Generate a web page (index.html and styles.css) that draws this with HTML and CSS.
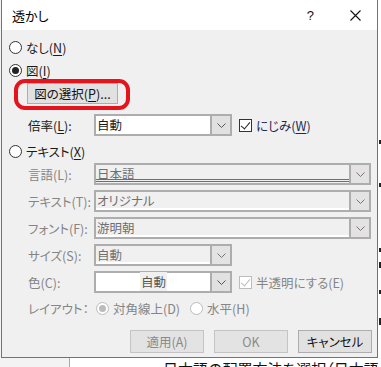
FILE: index.html
```html
<!DOCTYPE html>
<html>
<head>
    <meta charset="UTF-8">
    <title>透かし</title>
    <link rel="stylesheet" href="styles.css">
</head>
<body>
    <!-- документ за окном -->
    <div class="desk">
        <div class="pane"></div>
        <div class="edge">
            <span class="mark m1"></span>
            <span class="mark m2"></span>
            <span class="mark m3"></span>
            <span class="mark m4"></span>
            <span class="mark m5"></span>
            <span class="mark m6"></span>
        </div>
        <p class="doc-line">日本語の配置方法を選択（日本語テキスト）</p>
    </div>

    <div class="dialog">
        <div class="titlebar">
            <span class="title">透かし</span>
            <span class="help">?</span>
            <svg class="close" width="11" height="11" viewBox="0 0 11 11">
                <path d="M0.5 0.5 L10.5 10.5 M10.5 0.5 L0.5 10.5" stroke="#111" stroke-width="1.1" fill="none"/>
            </svg>
        </div>

        <div class="content">
            <div class="radio-row">
                <span class="radio"></span>
                <span>なし(<u>N</u>)</span>
            </div>
            <div class="radio-row second">
                <span class="radio on"></span>
                <span>図(<u>I</u>)</span>
            </div>

            <div class="pick-row">
                <button class="btn pick">図の選択(<u>P</u>)...</button>
            </div>

            <div class="field-row scale-row">
                <span class="label">倍率(<u>L</u>):</span>
                <div class="combo short">
                    <span class="value">自動</span>
                    <span class="drop">
                        <svg width="9" height="5" viewBox="0 0 9 5"><polyline points="0.5,0.5 4.5,4.5 8.5,0.5" fill="none" stroke="#555" stroke-width="1"/></svg>
                    </span>
                </div>
                <span class="check on"></span>
                <span class="check-text blur">にじみ(<u>W</u>)</span>
            </div>

            <div class="radio-row text-radio">
                <span class="radio"></span>
                <span>テキスト(<u>X</u>)</span>
            </div>

            <div class="text-grid">
                <span class="label off">言語(L):</span>
                <div class="combo wide off lang">
                    <span class="value">日本語</span>
                    <span class="drop">
                        <svg width="9" height="5" viewBox="0 0 9 5"><polyline points="0.5,0.5 4.5,4.5 8.5,0.5" fill="none" stroke="#7b6f7b" stroke-width="1"/></svg>
                    </span>
                </div>

                <span class="label off">テキスト(T):</span>
                <div class="combo wide off">
                    <span class="value">オリジナル</span>
                    <span class="drop">
                        <svg width="9" height="5" viewBox="0 0 9 5"><polyline points="0.5,0.5 4.5,4.5 8.5,0.5" fill="none" stroke="#7b6f7b" stroke-width="1"/></svg>
                    </span>
                </div>

                <span class="label off">フォント(F):</span>
                <div class="combo wide off">
                    <span class="value">游明朝</span>
                    <span class="drop">
                        <svg width="9" height="5" viewBox="0 0 9 5"><polyline points="0.5,0.5 4.5,4.5 8.5,0.5" fill="none" stroke="#7b6f7b" stroke-width="1"/></svg>
                    </span>
                </div>

                <span class="label off">サイズ(S):</span>
                <div class="line">
                    <div class="combo short off">
                        <span class="value">自動</span>
                        <span class="drop">
                            <svg width="9" height="5" viewBox="0 0 9 5"><polyline points="0.5,0.5 4.5,4.5 8.5,0.5" fill="none" stroke="#7b6f7b" stroke-width="1"/></svg>
                        </span>
                    </div>
                </div>

                <span class="label off">色(C):</span>
                <div class="line">
                    <div class="combo short color">
                        <span class="value center"><span class="swatch">自動</span></span>
                        <span class="drop">
                            <svg width="9" height="5" viewBox="0 0 9 5"><polyline points="0.5,0.5 4.5,4.5 8.5,0.5" fill="none" stroke="#555" stroke-width="1"/></svg>
                        </span>
                    </div>
                    <span class="check on off"></span>
                    <span class="check-text off">半透明にする(E)</span>
                </div>
            </div>

            <div class="field-row layout-row">
                <span class="label off">レイアウト：</span>
                <span class="radio on off"></span>
                <span class="opt off">対角線上(D)</span>
                <span class="radio off"></span>
                <span class="opt off">水平(H)</span>
            </div>

            <div class="actions">
                <button class="btn action" disabled>適用(A)</button>
                <button class="btn action" disabled>OK</button>
                <button class="btn action">キャンセル</button>
            </div>
        </div>
    </div>
</body>
</html>
```

FILE: styles.css
```css
/* Общие настройки */
html, body {
  margin: 0;
  padding: 0;
}

body {
  width: 381px;
  height: 367px;
  overflow: hidden;
  position: relative;
  background: #ffffff;
  font-family: "Noto Sans CJK JP", "Noto Sans", sans-serif;
  font-size: 12.5px;
  color: #1a1a1a;
  font-feature-settings: "palt";
}

u {
  text-decoration: underline;
  text-underline-offset: 2px;
}

/* Документ позади окна */
.desk {
  position: absolute;
  inset: 0;
}

.pane {
  position: absolute;
  left: 0;
  top: 0;
  width: 69px;
  height: 367px;
  background: #f3f3f3;
  border-right: 1px solid #a8a8a8;
}

.edge {
  position: absolute;
  left: 378px;
  top: 0;
  width: 3px;
  height: 367px;
}

.mark {
  position: absolute;
  left: 1px;
  width: 2px;
  height: 4px;
  background: #222;
}

.m1 { top: 140px; }
.m2 { top: 183px; }
.m3 { top: 248px; }
.m4 { top: 262px; height: 6px; }
.m5 { top: 290px; }
.m6 { top: 318px; height: 7px; }

.doc-line {
  position: absolute;
  left: 163px;
  top: 361px;
  margin: 0;
  font-size: 15px;
  line-height: 15px;
  color: #111;
  white-space: nowrap;
}

/* Окно диалога */
.dialog {
  position: absolute;
  left: 1px;
  top: 0;
  width: 375px;
  border-left: 1px solid #2d83d6;
  border-right: 1px solid #2d83d6;
  border-bottom: 1px solid #2d83d6;
  background: #f0f0f0;
}

.titlebar {
  height: 30px;
  background: #ffffff;
  display: flex;
  align-items: center;
}

.title {
  margin-left: 10px;
  font-size: 13px;
  color: #000;
}

.help {
  margin-left: auto;
  margin-right: 36px;
  font-size: 13px;
  font-family: "Liberation Sans", sans-serif;
  color: #111;
}

.close {
  margin-right: 16px;
}

.content {
  height: 327px;
  box-sizing: border-box;
  padding: 7px 5px 0 7px;
  display: flex;
  flex-direction: column;
}

/* Радиокнопки */
.radio-row {
  height: 20px;
  display: flex;
  align-items: center;
  gap: 4px;
}

.radio-row.second {
  margin-top: 3px;
}

.radio-row.text-radio {
  margin-top: 5px;
}

.radio {
  width: 13px;
  height: 13px;
  box-sizing: border-box;
  border: 1px solid #333;
  border-radius: 50%;
  background: #fff;
  position: relative;
  flex: none;
}

.radio.on::after {
  content: "";
  position: absolute;
  left: 2px;
  top: 2px;
  width: 7px;
  height: 7px;
  border-radius: 50%;
  background: #222;
}

.radio.off {
  border-color: #bcbcbc;
}

.radio.on.off::after {
  background: #bcbcbc;
}

/* Кнопки */
.btn {
  font-family: inherit;
  font-size: 12.5px;
  font-feature-settings: "palt";
  color: #111;
  background: #e1e1e1;
  border: 1px solid #adadad;
  padding: 0;
  margin: 0;
  box-sizing: border-box;
}

.pick-row {
  height: 30px;
}

.pick {
  position: relative;
  margin-left: 18px;
  margin-top: 3px;
  width: 91px;
  height: 21px;
}

/* Красная рамка-пометка */
.pick::before {
  content: "";
  position: absolute;
  left: -14px;
  top: -5px;
  right: -13px;
  bottom: -7px;
  border: 4px solid #e5131c;
  border-radius: 11px;
}

.action {
  width: 74px;
  height: 23px;
}

.action:disabled {
  color: #8a8a8a;
  background: #e3e3e3;
  border-color: #c4c4c4;
}

.actions {
  margin-top: 12px;
  display: flex;
  justify-content: flex-end;
  gap: 10px;
}

/* Поля */
.field-row {
  height: 22px;
  display: flex;
  align-items: center;
}

.scale-row {
  margin-top: 4px;
}

.label {
  width: 66px;
  margin-left: 19px;
  flex: none;
  white-space: nowrap;
}

.label.off,
.opt.off,
.check-text.off {
  color: #858585;
}

.combo {
  height: 22px;
  box-sizing: border-box;
  border: 2px solid #adadad;
  background: #fff;
  display: flex;
  align-items: stretch;
}

.combo.short {
  width: 138px;
  flex: none;
}

.combo.wide {
  width: 277px;
}

.combo.off {
  background: #f0f0f0;
  box-shadow: inset 0 -2px 0 #ffffff;
}

.combo.lang {
  box-shadow: inset 0 -1px 0 #f0f0f0, inset 0 -2px 0 #6e6e6e, inset 0 -3px 0 #f0f0f0, inset 0 -4px 0 #6e6e6e;
}

.value {
  flex: 1;
  padding-left: 1px;
  line-height: 17px;
  white-space: nowrap;
}

.combo.off .value {
  color: #6f6f6f;
}

.value.center {
  text-align: center;
}

.swatch {
  background: #f0f0f0;
  color: #555;
  padding: 0 1px;
}

.drop {
  width: 18px;
  flex: none;
  border-left: 2px solid #adadad;
  background: #e1e1e1;
  display: flex;
  align-items: center;
  justify-content: center;
}

.combo.off .drop {
  background: #e3e3e3;
}

/* Флажки */
.check {
  width: 13px;
  height: 13px;
  box-sizing: border-box;
  border: 1px solid #333;
  background: #fff;
  margin-left: 7px;
  flex: none;
  position: relative;
}

.check.on::after {
  content: "";
  position: absolute;
  left: 3px;
  top: 0px;
  width: 4px;
  height: 8px;
  border-right: 1px solid #222;
  border-bottom: 1px solid #222;
  transform: rotate(40deg);
}

.check.off {
  border-color: #bcbcbc;
}

.check.on.off::after {
  border-color: #bcbcbc;
}

.check-text {
  margin-left: 4px;
  white-space: nowrap;
}

.check-text.blur {
  color: #1b2a55;
}

/* Сетка текстового водяного знака */
.text-grid {
  margin-top: 2px;
  display: grid;
  grid-template-columns: 85px 277px;
  grid-auto-rows: 22px;
  row-gap: 5px;
  align-items: center;
}

.line {
  display: flex;
  align-items: center;
  height: 22px;
}

.layout-row {
  margin-top: 5px;
  height: 20px;
}

.layout-row .label {
  width: 68px;
}

.opt {
  margin-left: 4px;
  margin-right: 10px;
  white-space: nowrap;
}
```
